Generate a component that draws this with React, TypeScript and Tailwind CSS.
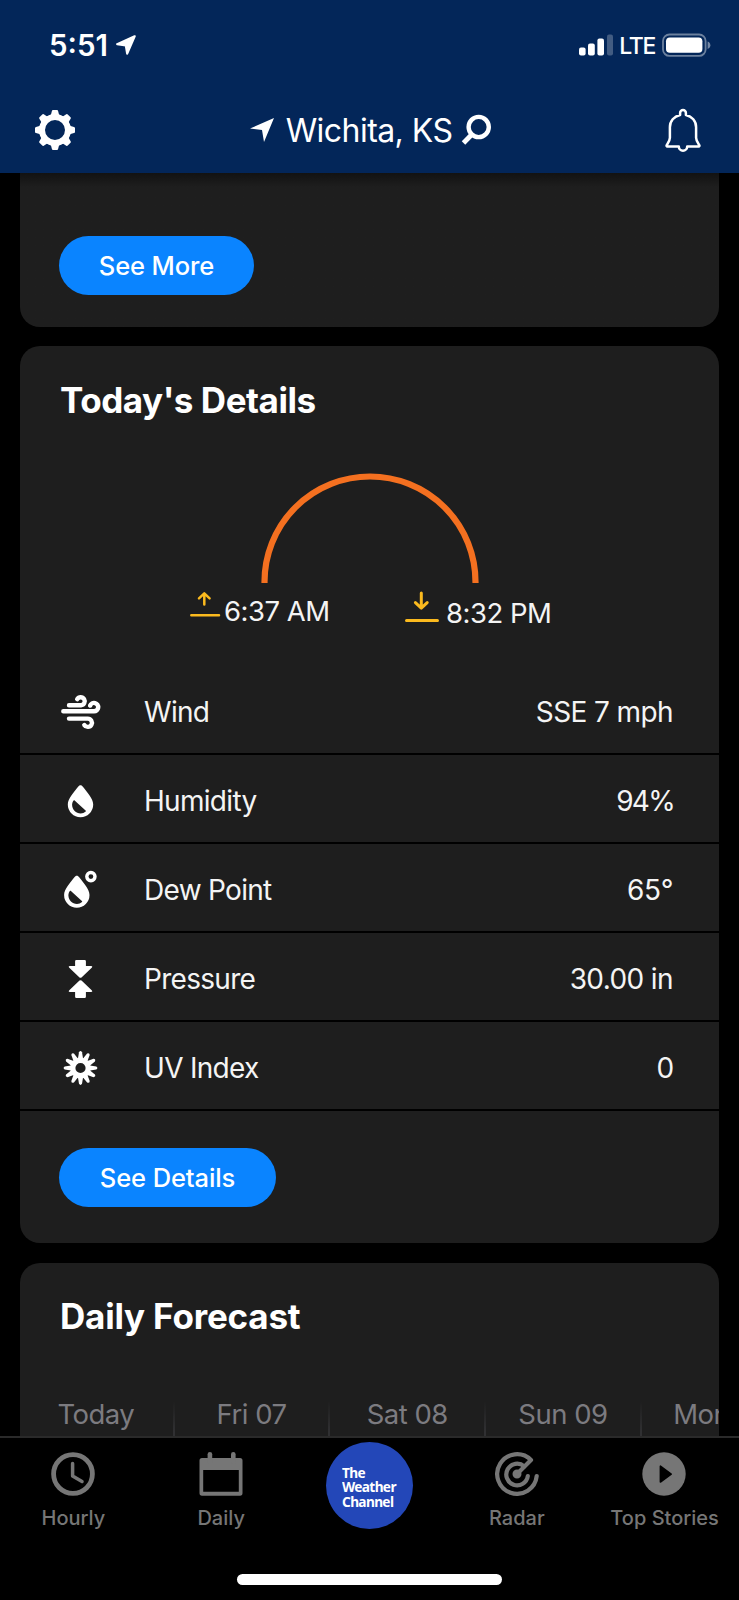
import type { ReactNode } from "react";

const DROP =
  "M0 -19.2C1 -19.2 1.8 -18.5 2.4 -17.7C6.5 -12.2 12.7 -5.6 12.7 0A12.7 12.7 0 0 1 -12.7 0C-12.7 -5.6 -6.5 -12.2 -2.4 -17.7C-1.8 -18.5 -1 -19.2 0 -19.2ZM-7.3 -3.5C-8.2 -2 -8.4 -.6 -8.4 .6C-8.2 5.4 -4.6 8.9 .2 8.9C2 8.9 3.8 8.2 5.2 7C5.6 6.6 5.4 6.2 4.8 5.7L-5.6 -3.8C-6.3 -4.4 -6.9 -4.3 -7.3 -3.5Z";

function LocationArrow({ className, size, join }: { className: string; size: number; join: "round" | "miter" }) {
  return (
    <svg className={className} width={size} height={size} viewBox="0 0 24 24" fill="white" stroke="white" strokeWidth={join === "round" ? 2.6 : 0} strokeLinejoin={join}>
      <path d={join === "round" ? "M22.4 1.6L1.4 11L11.8 12.6L13.4 22.4Z" : "M24 0L0 10.5L12 12L14 24Z"} />
    </svg>
  );
}

function Gear() {
  return (
    <svg className="h-10 w-10" viewBox="-20 -20 40 40">
      <circle r="13" fill="none" stroke="white" strokeWidth="6" />
      {[0, 45, 90, 135, 180, 225, 270, 315].map((a) => (
        <path key={a} transform={`rotate(${a})`} fill="white" d="M-2 -20H2Q2.9 -20 3.1 -19L4 -15.6L6 -13.5H-6L-4 -15.6L-3.1 -19Q-2.9 -20 -2 -20Z" />
      ))}
    </svg>
  );
}

function Bell() {
  return (
    <svg className="h-11 w-9" viewBox="0 -.7 36 44" fill="none" stroke="white" strokeWidth="2.5" strokeLinejoin="round" strokeLinecap="round">
      <path d="M15.1 6.3V4.3A2.9 2.9 0 0 1 20.9 4.3V6.3C27 7.6 31.1 12.4 31.1 18.5V29C31.1 32.2 33 34.5 34.3 36.4C34.7 37.1 34.4 37.8 33.7 37.8H22.2A4.2 4.2 0 0 1 13.8 37.8H2.3C1.6 37.8 1.3 37.1 1.7 36.4C3 34.5 4.9 32.2 4.9 29V18.5C4.9 12.4 9 7.6 15.1 6.3Z" />
    </svg>
  );
}

function WindIcon() {
  return (
    <svg className="h-10 w-10 overflow-visible" viewBox="-1 0 40 40" fill="none" stroke="white" strokeWidth="4.4" strokeLinecap="round">
      <path d="M8 13.3H20A4.05 4.05 0 1 0 16.2 7.2M2.3 19.3H33A4.2 4.2 0 1 0 29.1 13.6M8 26.6H26.7A4.15 4.15 0 1 1 23.3 33" />
    </svg>
  );
}

function HumidityIcon() {
  return (
    <svg className="h-10 w-10" viewBox="-20.5 -23.5 40 40">
      <path fill="white" fillRule="evenodd" d={DROP} />
    </svg>
  );
}

function DewIcon() {
  return (
    <svg className="h-10 w-10" viewBox="-16.8 -25 40 40">
      <path fill="white" fillRule="evenodd" d={DROP} />
      <circle cx="14.1" cy="-18.4" r="4.1" fill="none" stroke="white" strokeWidth="3.4" />
    </svg>
  );
}

function PressureIcon() {
  const arrow = "M-4.2 -19H4.2Q5.4 -19 5.4 -17.8V-13H10.6Q12.6 -12.8 11.2 -11.2L1 -1.6Q0 -.8 -1 -1.6L-11.2 -11.2Q-12.6 -12.8 -10.6 -13H-5.4V-17.8Q-5.4 -19 -4.2 -19Z";
  return (
    <svg className="h-10 w-10" viewBox="-20.5 -20 40 40" fill="white">
      <path d={arrow} />
      <path d={arrow} transform="scale(1 -1)" />
    </svg>
  );
}

function UvIcon() {
  return (
    <svg className="h-10 w-10" viewBox="-20.5 -20 40 40" stroke="white">
      <circle r="7.7" fill="none" strokeWidth="5.2" />
      {[0, 30, 60, 90, 120, 150, 180, 210, 240, 270, 300, 330].map((a) => (
        <path key={a} transform={`rotate(${a})`} fill="white" strokeWidth="0" d="M-2.8 -8L-1.5 -15.8Q0 -18 1.5 -15.8L2.8 -8Z" />
      ))}
    </svg>
  );
}

function Row({ icon, label, value, valueClass = "tracking-[-0.6px]" }: { icon: ReactNode; label: string; value: string; valueClass?: string }) {
  return (
    <div className="flex h-[89px] items-center border-b-2 border-black pt-[5px] pr-[46px] pl-10 text-[28px] leading-10 text-[#f4f4f4]">
      {icon}
      <span className="ml-11 tracking-[-0.7px]">{label}</span>
      <span className={`ml-auto ${valueClass}`}>{value}</span>
    </div>
  );
}

function Pill({ children, className }: { children: ReactNode; className: string }) {
  return (
    <button className={`flex h-[59px] items-center justify-center rounded-full bg-[#0a84ff] pt-0.5 text-[25.5px] font-medium tracking-[-0.1px] text-white ${className}`}>
      {children}
    </button>
  );
}

function Tab({ icon, label }: { icon: ReactNode; label: string }) {
  return (
    <div className="flex w-[148px] flex-col items-center pt-[14px] text-[20px] leading-6 font-medium text-[#767676]">
      {icon}
      <span className="mt-[10px] -ml-px whitespace-nowrap">{label}</span>
    </div>
  );
}

export default function App() {
  return (
    <div className="flex h-[1600px] w-[739px] flex-col overflow-hidden bg-black font-['Inter','Liberation_Sans',sans-serif] text-white">
      <header className="h-[173px] shrink-0 bg-[#032659]">
        <div className="flex h-[90px] items-center pr-[28px] pl-[49px]">
          <span className="mt-px text-[29.5px] font-semibold">5:51</span>
          <LocationArrow className="ml-2" size={20} join="round" />
          <svg className="ml-auto h-6 w-9" viewBox="0 0 36 24" fill="white">
            <rect x="1" y="14.5" width="6.6" height="8" rx="2" />
            <rect x="10" y="10.5" width="6.8" height="12" rx="2" />
            <rect x="19.4" y="5.5" width="6.6" height="17" rx="2" />
            <rect x="29" y="1.5" width="6" height="21" rx="2" opacity=".25" />
          </svg>
          <span className="mt-0.5 ml-[5px] text-[23px] font-medium tracking-[-1.3px]">LTE</span>
          <svg className="ml-[7px] h-6 w-[49px]" viewBox="0 -.5 49 24" fill="white">
            <rect x="1" y="1" width="42.6" height="21.4" rx="6.5" fill="none" stroke="white" strokeWidth="1.8" opacity=".42" />
            <rect x="4" y="4" width="36.4" height="15.3" rx="3.8" />
            <path d="M45.6 8C49.3 9.2 49.3 14.2 45.6 15.4Z" opacity=".45" />
          </svg>
        </div>
        <div className="flex h-20 items-center justify-between pr-[38px] pl-[35px]">
          <Gear />
          <div className="flex items-center pl-0.5 text-[32px] tracking-[-0.55px]">
            <LocationArrow className="mr-3" size={24} join="miter" />
            <span className="mt-0.5">Wichita, KS</span>
            <svg className="ml-2 h-8 w-8" viewBox="0 0 32 32" fill="none" stroke="white" strokeWidth="4.4">
              <circle cx="18.7" cy="13" r="10.1" />
              <path d="M11.8 20.5L3.5 29" strokeWidth="4.8" />
            </svg>
          </div>
          <Bell />
        </div>
      </header>

      <main className="flex min-h-0 flex-1 flex-col overflow-hidden px-5">
        <section className="h-[153.5px] shrink-0 rounded-b-[20px] bg-[#1e1e1e] bg-linear-to-b from-[#121212] to-[#1e1e1e] to-[14px] pt-[62.5px] pl-[39px]">
          <Pill className="w-[195px]">See More</Pill>
        </section>

        <section className="mt-[19.5px] h-[896.5px] shrink-0 rounded-[20px] bg-[#1e1e1e]">
          <h2 className="h-[127px] pt-[34px] pl-10 text-[35px] leading-10 font-bold tracking-[-0.45px]">Today's Details</h2>
          <div className="flex justify-center">
            <svg className="h-[110px] w-[220px]" viewBox="0 0 220 110" fill="none" stroke="#f47020" strokeWidth="6.2">
              <path d="M4.5 110V109A105.5 105.5 0 0 1 215.5 109V110" />
            </svg>
          </div>
          <div className="flex h-[83px] items-start pl-[169px] text-[27.5px] leading-8 tracking-[-0.5px] text-[#f4f4f4]">
            <svg className="mt-1.5 h-9 w-[35px] shrink-0" viewBox="0 0 35 36" fill="none" stroke="#fbba1e" strokeWidth="2.5" strokeLinecap="round" strokeLinejoin="round">
              <path d="M2.3 26.2H30M15.3 15.5V4.5M10 9.3L15.3 4.3L20.6 9.3" />
            </svg>
            <span className="mt-3 w-[180px] whitespace-nowrap">6:37 AM</span>
            <svg className="mt-1.5 h-9 w-[42px] shrink-0" viewBox="0 0 42 36" fill="none" stroke="#fbba1e" strokeWidth="3" strokeLinecap="round" strokeLinejoin="round">
              <path d="M2.5 31.5H33.5M17.3 4V18.5M11.4 13.6L17.3 19.2L23.2 13.6" />
            </svg>
            <span className="mt-[14px] whitespace-nowrap">8:32 PM</span>
          </div>
          <Row icon={<WindIcon />} label="Wind" value="SSE 7 mph" />
          <Row icon={<HumidityIcon />} label="Humidity" value="94%" valueClass="-mr-px tracking-[-1.7px]" />
          <Row icon={<DewIcon />} label="Dew Point" value="65°" valueClass="tracking-[-0.4px]" />
          <Row icon={<PressureIcon />} label="Pressure" value="30.00 in" />
          <Row icon={<UvIcon />} label="UV Index" value="0" valueClass="-mr-px tracking-[-0.2px]" />
          <div className="pt-[37px] pl-[39px]">
            <Pill className="w-[217px]">See Details</Pill>
          </div>
        </section>

        <section className="mt-5 h-[220px] shrink-0 overflow-hidden rounded-t-[20px] bg-[#1e1e1e]">
          <h2 className="pt-[33px] pl-10 text-[35px] leading-10 font-bold tracking-[-0.2px]">Daily Forecast</h2>
          <div className="mt-[61px] -ml-px flex w-[800px] text-[27.5px] leading-[34px] tracking-[-0.5px] text-[#7c7b80]">
            {["Today", "Fri 07", "Sat 08", "Sun 09", "Mon 10"].map((d) => (
              <div key={d} className="flex h-16 w-[155.7px] shrink-0">
                <span className="flex-1 text-center">{d}</span>
                <span className="mt-1 w-0.5 bg-linear-to-b from-[#1e1e1e] to-[#303032] to-[30px]" />
              </div>
            ))}
          </div>
        </section>
      </main>

      <nav className="h-[164px] shrink-0 border-t-2 border-[#2a2a2a] bg-black">
        <div className="flex h-[136px] justify-center">
          <Tab
            label="Hourly"
            icon={
              <svg className="-ml-px h-11 w-11" viewBox="-22 -22 44 44" fill="none" stroke="currentColor" strokeLinecap="round" strokeLinejoin="round">
                <circle r="19.4" strokeWidth="4.8" />
                <path d="M-.4 -10.5V2L9 7.5" strokeWidth="3.5" />
              </svg>
            }
          />
          <Tab
            label="Daily"
            icon={
              <svg className="-ml-0.5 h-11 w-11" viewBox="0 0 44 44" fill="currentColor">
                <path fillRule="evenodd" d="M3 6H41Q43.5 6 43.5 8.5V41Q43.5 43.8 41 43.8H3Q.5 43.8 .5 41V8.5Q.5 6 3 6ZM4.2 18V39.8H39.8V18Z" />
                <rect x="8.6" y="0" width="4.6" height="12" rx="2.3" />
                <rect x="32" y="0" width="4.6" height="12" rx="2.3" />
              </svg>
            }
          />
          <div className="flex w-[148px] justify-center pt-1">
            <div className="h-[87px] w-[87px] rounded-full bg-[#2347b8] pt-[23px] pl-[16.5px]">
              <p className="origin-left scale-x-[.91] font-['Noto_Sans',sans-serif] text-[15px] leading-[14.3px] font-bold tracking-[-0.7px]">
                The
                <br />
                Weather
                <br />
                Channel
              </p>
            </div>
          </div>
          <Tab
            label="Radar"
            icon={
              <svg className="h-11 w-11" viewBox="-22 -22 44 44" fill="none" stroke="currentColor" strokeWidth="4.2" strokeLinecap="round" strokeLinejoin="round">
                <path d="M0 0L14 -14A19.8 19.8 0 1 0 19.7 2" />
                <path d="M7.2 -7.6A10.8 10.8 0 1 0 10.8 2" />
                <circle r="2.4" fill="currentColor" />
              </svg>
            }
          />
          <Tab
            label="Top Stories"
            icon={
              <svg className="-ml-0.5 h-11 w-11" viewBox="-22 -22 44 44">
                <circle r="21.7" fill="currentColor" />
                <path d="M-3.6 -7.8V8L7.2 .1Z" fill="black" stroke="black" strokeWidth="1.6" strokeLinejoin="round" />
              </svg>
            }
          />
        </div>
        <div className="mx-auto h-[10.5px] w-[265px] rounded-full bg-white" />
      </nav>
    </div>
  );
}
